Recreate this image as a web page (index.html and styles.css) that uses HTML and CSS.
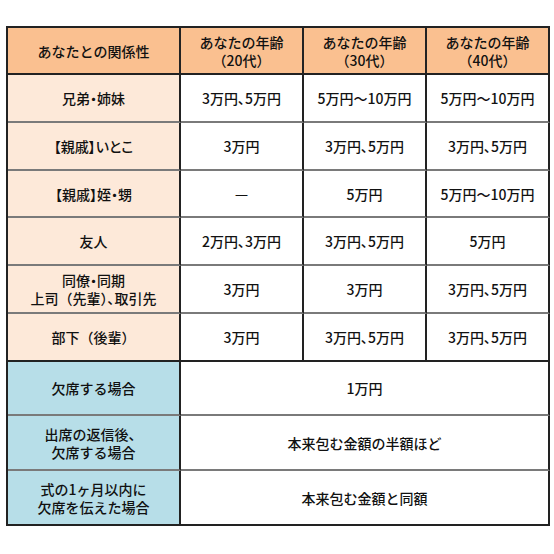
FILE: index.html
```html
<!DOCTYPE html>
<html lang="ja">
<head>
<meta charset="utf-8">
<link rel="stylesheet" href="styles.css">
</head>
<body>
<table class="gift">
  <colgroup>
    <col class="c-rel">
    <col class="c-age">
    <col class="c-age">
    <col class="c-age">
  </colgroup>
  <thead>
    <tr class="r-head">
      <th>あなたとの関係性</th>
      <th>あなたの年齢<br>（20代）</th>
      <th>あなたの年齢<br>（30代）</th>
      <th>あなたの年齢<br>（40代）</th>
    </tr>
  </thead>
  <tbody>
    <tr class="r48">
      <th class="rel np">兄弟・姉妹</th>
      <td class="np">3万円、5万円</td>
      <td>5万円～10万円</td>
      <td>5万円～10万円</td>
    </tr>
    <tr class="r48">
      <th class="rel np">【親戚】いとこ</th>
      <td>3万円</td>
      <td class="np">3万円、5万円</td>
      <td class="np">3万円、5万円</td>
    </tr>
    <tr class="r47">
      <th class="rel np">【親戚】姪・甥</th>
      <td><span class="dash">―</span></td>
      <td>5万円</td>
      <td>5万円～10万円</td>
    </tr>
    <tr class="r48">
      <th class="rel">友人</th>
      <td class="np">2万円、3万円</td>
      <td class="np">3万円、5万円</td>
      <td>5万円</td>
    </tr>
    <tr class="r48">
      <th class="rel">同僚<span class="np">・</span>同期<br>上司（先輩）<span class="np">、</span>取引先</th>
      <td>3万円</td>
      <td>3万円</td>
      <td class="np">3万円、5万円</td>
    </tr>
    <tr class="r48 sect-end">
      <th class="rel">部下（後輩）</th>
      <td>3万円</td>
      <td class="np">3万円、5万円</td>
      <td class="np">3万円、5万円</td>
    </tr>
    <tr class="r54">
      <th class="abs">欠席する場合</th>
      <td colspan="3">1万円</td>
    </tr>
    <tr class="r55">
      <th class="abs">出席の返信後、<br>欠席する場合</th>
      <td colspan="3">本来包む金額の半額ほど</td>
    </tr>
    <tr class="r55 sect-end">
      <th class="abs">式の1ヶ月以内に<br>欠席を伝えた場合</th>
      <td colspan="3">本来包む金額と同額</td>
    </tr>
  </tbody>
</table>
</body>
</html>
```

FILE: styles.css
```css
html, body {
  margin: 0;
  padding: 0;
  background: #ffffff;
}

body {
  font-family: "Noto Sans CJK JP", "Noto Sans", sans-serif;
  color: #111111;
  font-size: 14px;
}

.gift {
  margin: 26px 0 0 6px;
  border-collapse: separate;
  border-spacing: 0;
  border-left: 2px solid #222222;
  border-top: 2px solid #222222;
  table-layout: fixed;
  width: 542px;
}

.c-rel { width: 173px; }
.c-age { width: 123px; }

.gift th,
.gift td {
  box-sizing: border-box;
  padding: 0;
  text-align: center;
  vertical-align: middle;
  font-weight: 500;
  line-height: 18px;
  border-right: 2px solid #222222;
  border-bottom: 2px solid #7a7a7a;
  background: #ffffff;
}

.gift .np {
  font-feature-settings: "palt" 1;
}

.r-head th {
  background: #fac090;
  border-bottom-color: #222222;
}

.gift th.rel { background: #fde9d9; }
.gift th.abs { background: #b7dee8; }

.sect-end th,
.sect-end td {
  border-bottom-color: #222222;
}

.dash {
  display: inline-block;
  font-weight: 700;
  transform: scaleY(1.6);
}

.r-head { height: 47px; }
.r47 { height: 47px; }
.r48 { height: 48px; }
.r54 { height: 54px; }
.r55 { height: 55px; }
```
